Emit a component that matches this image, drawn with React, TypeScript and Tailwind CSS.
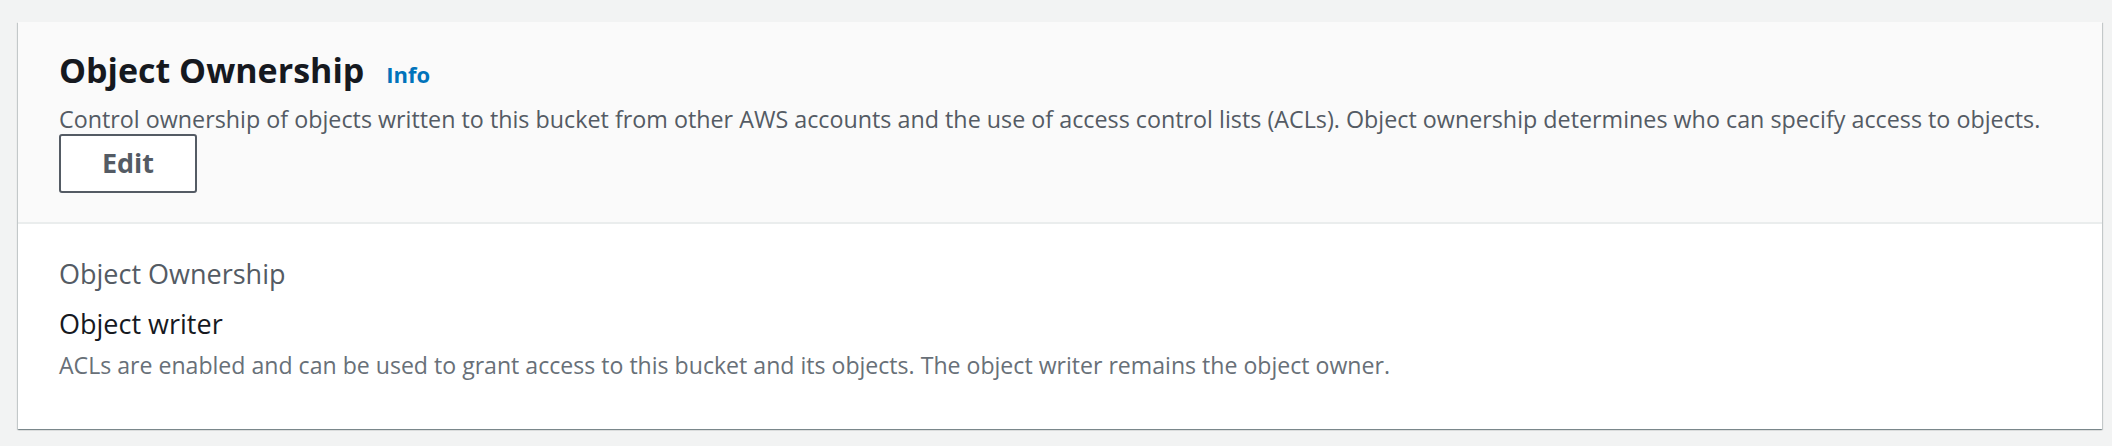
// Object Ownership panel (S3 bucket permissions)

const font = { fontFamily: '"Open Sans", "Noto Sans", sans-serif' };

function InfoLink() {
    return (
        <a href="#" className="text-[22px] font-bold leading-[44px] text-[#0073bb] no-underline">
            Info
        </a>
    );
}

export default function App() {
    return (
        <div className="h-[446px] w-full bg-[#f2f3f3] pt-[22px] pl-[18px]" style={font}>
            <div className="w-[2084px] bg-white shadow-[0_1px_1px_0_rgba(0,28,36,0.3),1px_1px_1px_0_rgba(0,28,36,0.15),-1px_1px_1px_0_rgba(0,28,36,0.15)]">
                {/* header */}
                <div className="bg-[#fafafa] border-b-2 border-[#eaeded] pl-[41px] pr-[40px] pt-[26px] pb-[29px]">
                    <div className="flex items-baseline gap-[22px]">
                        <h2 className="text-[34px] font-bold leading-[44px] text-[#16191f]">Object Ownership</h2>
                        <InfoLink />
                    </div>
                    <p className="mt-[8px] text-[23.3px] leading-[30px] text-[#545b64]">
                        Control ownership of objects written to this bucket from other AWS accounts and the use of access
                        control lists (ACLs). Object ownership determines who can specify access to objects.
                    </p>
                    <button className="flex h-[59px] w-[138px] items-center justify-center rounded-[3px] border-2 border-[#545b64] bg-white text-[27px] font-bold text-[#545b64]">
                        Edit
                    </button>
                </div>

                {/* body */}
                <div className="pl-[41px] pr-[40px] pt-[32px] pb-[49px]">
                    <div className="text-[27px] leading-[36px] text-[#545b64]">Object Ownership</div>
                    <div className="mt-[14px] text-[27px] leading-[36px] text-[#16191f]">Object writer</div>
                    <p className="mt-[8px] text-[23.1px] leading-[30px] text-[#687078]">
                        ACLs are enabled and can be used to grant access to this bucket and its objects. The object writer
                        remains the object owner.
                    </p>
                </div>
            </div>
        </div>
    );
}
